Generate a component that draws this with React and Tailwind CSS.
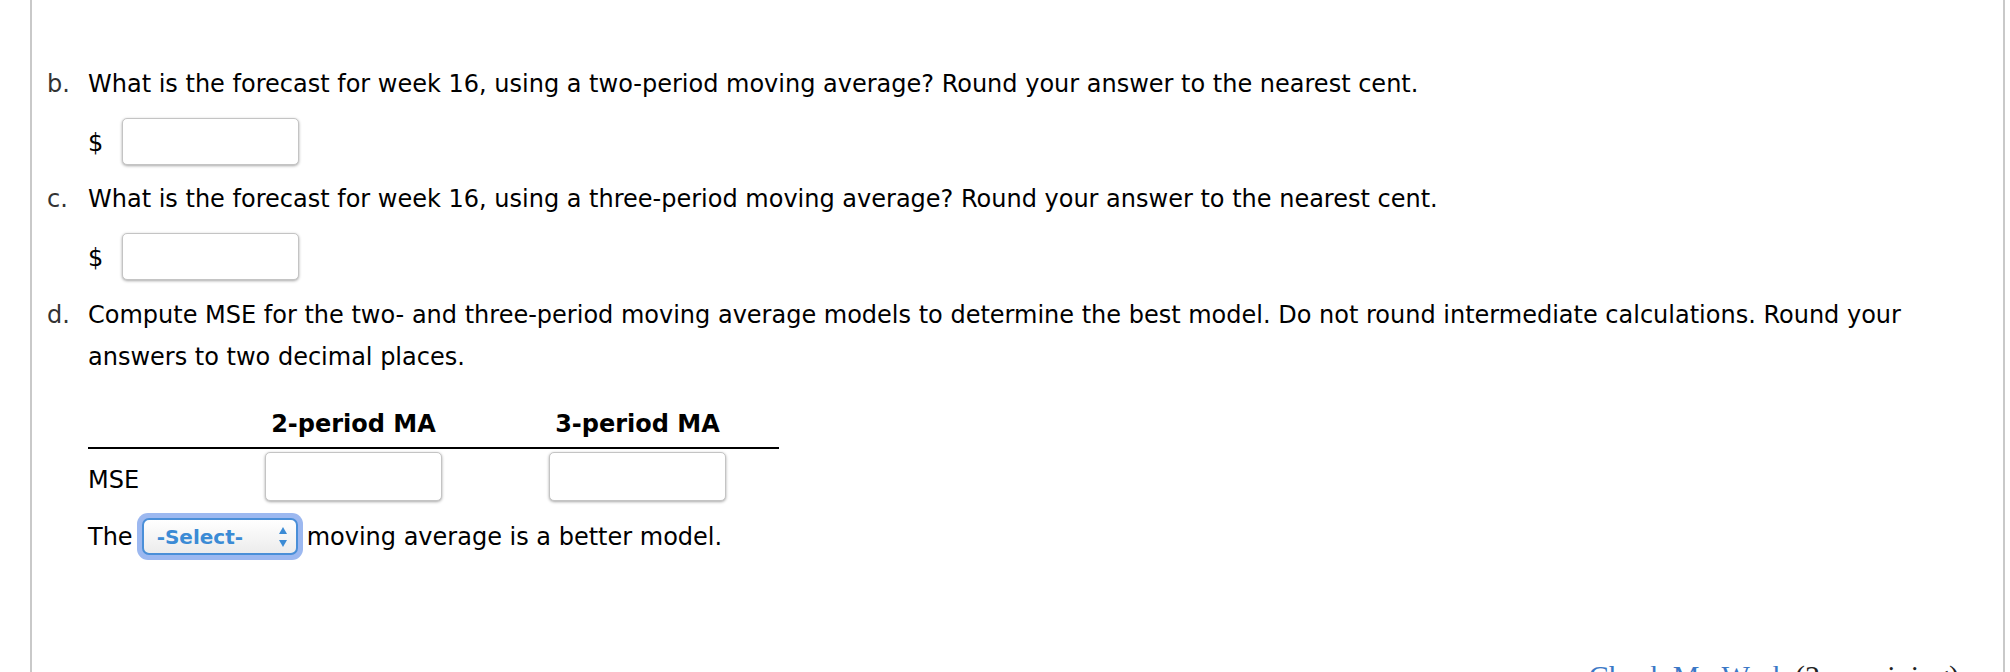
import React from "react";

function AnswerBox({ className = "" }) {
  return (
    <div
      className={`h-[47px] w-[177px] rounded-[5px] border border-[#c4c4c4] bg-white shadow-[0_1px_3px_rgba(0,0,0,0.35)] ${className}`}
    ></div>
  );
}

function Part({ letter, children }) {
  return (
    <div className="flex">
      <div className="w-[41px] shrink-0 text-[#333]">{letter}</div>
      <div className="flex-1">{children}</div>
    </div>
  );
}

function DollarInput() {
  return (
    <div className="mt-[13px] flex items-center pl-[41px]">
      <span className="w-[34px] pt-[3px]">$</span>
      <AnswerBox />
    </div>
  );
}

function SelectBox() {
  return (
    <div className="mx-[4px] rounded-[11px] bg-[#9cb8f0] p-[5px]">
      <div className="flex h-[37px] w-[156px] items-center justify-between rounded-[7px] border-2 border-[#4a8fd8] bg-gradient-to-b from-white to-[#ececec] pl-[13px] pr-[8px]">
        <span className="text-[20px] font-bold leading-none text-[#3b8bd5]">-Select-</span>
        <svg width="10" height="22" viewBox="0 0 10 22" className="mt-[1px]">
          <path d="M5 1 L9 8 L1 8 Z" fill="#3b8bd5" />
          <path d="M5 21 L9 14 L1 14 Z" fill="#3b8bd5" />
        </svg>
      </div>
    </div>
  );
}

export default function App() {
  return (
    <div className="h-[672px] overflow-hidden bg-white">
      <div
        className="ml-[30px] mr-[5px] min-h-[720px] border-x-2 border-[#c9c9c9] pl-[15px] pt-[63px] text-[24px] leading-[42px] text-black"
        style={{ fontFamily: '"DejaVu Sans", Verdana, sans-serif' }}
      >
        <Part letter="b.">
          What is the forecast for week 16, using a two-period moving average? Round your answer to the nearest cent.
        </Part>
        <DollarInput />

        <div className="mt-[13px]">
          <Part letter="c.">
            What is the forecast for week 16, using a three-period moving average? Round your answer to the nearest cent.
          </Part>
        </div>
        <DollarInput />

        <div className="mt-[14px]">
          <Part letter="d.">
            Compute MSE for the two- and three-period moving average models to determine the best model. Do not round intermediate calculations. Round your answers to two decimal places.
          </Part>
        </div>

        <div className="ml-[41px] mt-[31px] w-[691px]">
          <div className="grid grid-cols-[177px_177px_107px_177px_53px] border-b-2 border-black pb-[8px] text-[24px] font-bold leading-[30px]">
            <div></div>
            <div className="text-center">2-period MA</div>
            <div></div>
            <div className="text-center">3-period MA</div>
            <div></div>
          </div>
          <div className="mt-[2px] grid grid-cols-[177px_177px_107px_177px_53px] items-center">
            <div className="pt-[8px]">MSE</div>
            <AnswerBox className="h-[49px]" />
            <div></div>
            <AnswerBox className="h-[49px]" />
            <div></div>
          </div>
        </div>

        <div className="ml-[41px] mt-[12px] flex items-center">
          <span>The</span>
          <SelectBox />
          <span>moving average is a better model.</span>
        </div>

        <div className="mt-[96px] flex justify-end pr-[44px]">
          <span
            className="text-[30px] leading-[40px]"
            style={{ fontFamily: '"Liberation Serif", "Times New Roman", serif' }}
          >
            <span className="text-[#3b78c6]">Check My Work</span>
            <span className="text-[#222]"> (2 remaining)</span>
          </span>
        </div>
      </div>
    </div>
  );
}
